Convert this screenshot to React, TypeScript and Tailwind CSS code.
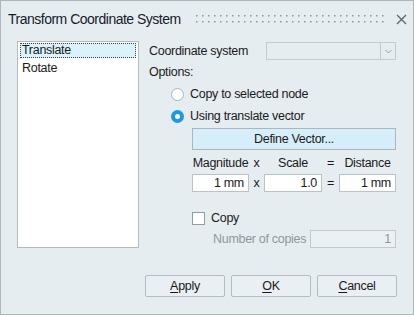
import React from "react";

const font = { fontFamily: '"Liberation Sans", Arial, sans-serif' };

function Radio({ checked }: { checked?: boolean }) {
  return checked ? (
    <div className="w-[13px] h-[13px] shrink-0 rounded-full bg-[#1a9ae0] flex items-center justify-center">
      <div className="w-[5px] h-[5px] rounded-full bg-white" />
    </div>
  ) : (
    <div className="w-[13px] h-[13px] shrink-0 rounded-full bg-white border border-[#a9b2b8]" />
  );
}

function Btn({ first, rest }: { first: string; rest: string }) {
  return (
    <button className="w-[80px] h-[22px] bg-[#e9eff2] border border-[#b3bcc2] rounded-[2px] text-[12.5px] tracking-[-0.3px] text-[#1a1a1a] flex items-center justify-center">
      <span>
        <span className="underline underline-offset-2">{first}</span>
        {rest}
      </span>
    </button>
  );
}

export default function App() {
  return (
    <div
      style={font}
      className="w-[414px] h-[315px] bg-[#e6edf1] border border-[#aeb6bb] flex flex-col text-[12.5px] tracking-[-0.3px] text-[#1a1a1a] whitespace-nowrap"
    >
      {/* Title bar */}
      <div className="h-[40px] flex items-start pt-[9px] pl-[7px]">
        <div className="w-[176px] shrink-0 text-[14px] tracking-[-0.5px] text-[#16202a] leading-[18px] whitespace-nowrap">
          Transform Coordinate System
        </div>
        <svg width="192" height="10" className="ml-[12px] mt-[5px] shrink-0">
          {Array.from({ length: 32 }).map((_, i) => (
            <g key={i}>
              <rect x={i * 6} y={0} width="1.5" height="1.5" fill="#8c969c" />
              <rect x={i * 6} y={6} width="1.5" height="1.5" fill="#8c969c" />
            </g>
          ))}
        </svg>
        <svg width="11" height="11" className="ml-[8px] mt-[4px] shrink-0" viewBox="0 0 11 11">
          <path d="M1 1 L10 10 M10 1 L1 10" stroke="#5f686e" strokeWidth="1.4" />
        </svg>
      </div>

      {/* Content */}
      <div className="flex pl-[16px]">
        <div className="w-[122px] h-[207px] shrink-0 bg-white border border-[#b4bcc1] pt-[1px] px-[2px]">
          <div className="h-[15px] bg-[#d9f2fc] border border-dotted border-[#404040] leading-[13px] pl-[1px]">
            Translate
          </div>
          <div className="h-[17px] leading-[17px] pl-[2px] mt-[2px]">Rotate</div>
        </div>

        <div className="ml-[10px] w-[247px] flex flex-col">
          <div className="flex items-center h-[18px] mt-[1px]">
            <div className="w-[117px] shrink-0">Coordinate system</div>
            <div className="w-[130px] h-[18px] border border-[#c3cbd0] flex justify-end">
              <div className="w-[15px] h-full border-l border-[#c3cbd0] flex items-center justify-center">
                <svg width="7" height="5" viewBox="0 0 7 5">
                  <path d="M0.5 1 L3.5 4 L6.5 1" stroke="#9aa3a8" fill="none" strokeWidth="1" />
                </svg>
              </div>
            </div>
          </div>
          <div className="h-[16px] leading-[16px] mt-[4px]">Options:</div>
          <div className="flex items-center h-[16px] mt-[6px] pl-[22px] gap-[6px]">
            <Radio />
            <span>Copy to selected node</span>
          </div>
          <div className="flex items-center h-[16px] mt-[6px] pl-[22px] gap-[6px]">
            <Radio checked />
            <span>Using translate vector</span>
          </div>
          <div className="ml-[43px] mt-[4px] h-[22px] bg-[#d5eef9] border border-[#abb6bd] flex items-center justify-center">
            Define Vector...
          </div>
          <div className="ml-[43px] mt-[5px] h-[16px] flex items-center">
            <div className="w-[57px] text-center">Magnitude</div>
            <div className="w-[15px] text-center">x</div>
            <div className="w-[58px] text-center">Scale</div>
            <div className="w-[17px] text-center">=</div>
            <div className="flex-1 text-center">Distance</div>
          </div>
          <div className="ml-[43px] mt-[3px] h-[18px] flex items-center">
            <div className="w-[57px] h-[18px] bg-white border border-[#b8c2c8] text-right pr-[4px] leading-[16px]">1 mm</div>
            <div className="w-[15px] text-center">x</div>
            <div className="w-[58px] h-[18px] bg-white border border-[#b8c2c8] text-right pr-[4px] leading-[16px]">1.0</div>
            <div className="w-[17px] text-center">=</div>
            <div className="flex-1 h-[18px] bg-white border border-[#b8c2c8] text-right pr-[4px] leading-[16px]">1 mm</div>
          </div>
          <div className="ml-[43px] mt-[19px] h-[15px] flex items-center gap-[6px]">
            <div className="w-[13px] h-[13px] bg-white border border-[#8d9ea8]" />
            <span>Copy</span>
          </div>
          <div className="ml-[64px] mt-[4px] h-[18px] flex items-center">
            <span className="text-[#8f979c] w-[97px] shrink-0">Number of copies</span>
            <div className="flex-1 h-[18px] border border-[#c1c9ce] bg-[#eaf0f3] text-right pr-[4px] text-[#8f979c] leading-[16px]">
              1
            </div>
          </div>
        </div>
      </div>

      <div className="flex justify-end gap-[6px] pr-[16px] mt-[27px]">
        <Btn first="A" rest="pply" />
        <Btn first="O" rest="K" />
        <Btn first="C" rest="ancel" />
      </div>
    </div>
  );
}
